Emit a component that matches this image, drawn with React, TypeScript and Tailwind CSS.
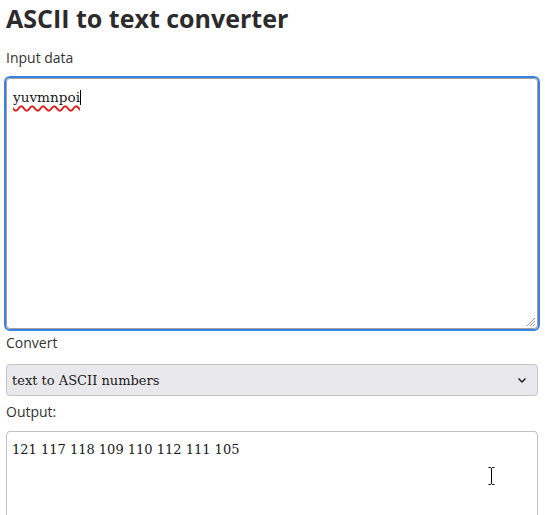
import React from "react";

export default function App() {
  return (
    <div className="relative w-[552px] h-[515px] overflow-hidden bg-white px-[6px] text-[#333333]" style={{ fontFamily: '"Open Sans", sans-serif' }}>
      <h1 className="pt-[2px] text-[25px] font-bold leading-[32px] text-[#2b2b2b]">ASCII to text converter</h1>
      <div className="mt-[13px] text-[14px] leading-[21px]">Input data</div>
      <div className="mt-[10px] h-[251px] w-[532px] rounded-[4px] border border-[#a0a0a0] outline-2 outline-solid outline-[#3a82e0] relative">
        <div className="pl-[6px] pt-[10px] text-[13.6px] leading-[16px] text-[#1a1a1a]" style={{ fontFamily: '"DejaVu Serif", serif' }}>
          <span className="underline decoration-wavy decoration-[#e01b1b] decoration-[1.5px] underline-offset-[3px]">yuvmnpoi</span>
          <span className="inline-block w-[1px] h-[15px] bg-black align-[-3px]"></span>
        </div>
        <svg className="absolute right-[1px] bottom-[1px]" width="10" height="10" viewBox="0 0 10 10">
          <line x1="9" y1="1" x2="1" y2="9" stroke="#999" strokeWidth="1" />
          <line x1="9" y1="4" x2="4" y2="9" stroke="#999" strokeWidth="1" />
          <line x1="9" y1="7" x2="7" y2="9" stroke="#999" strokeWidth="1" />
        </svg>
      </div>
      <div className="mt-[3px] text-[14px] leading-[21px]">Convert</div>
      <div className="mt-[11px] flex h-[32px] w-[532px] items-center justify-between rounded-[4px] border border-[#c4c4c8] bg-[#e9e9ed] pl-[5px] pr-[10px]">
        <span className="pt-[2px] text-[13px] text-[#1a1a1a]" style={{ fontFamily: '"DejaVu Serif", serif' }}>text to ASCII numbers</span>
        <svg width="10" height="7" viewBox="0 0 10 7">
          <polyline points="1.5,1.5 5,5 8.5,1.5" fill="none" stroke="#222" strokeWidth="1.5" />
        </svg>
      </div>
      <div className="mt-[5px] text-[14px] leading-[21px]">Output:</div>
      <div className="mt-[9px] h-[120px] w-[532px] rounded-[4px] border border-[#c0c0c0] relative">
        <div className="pl-[5px] pt-[10px] text-[13px] leading-[16px] text-[#1a1a1a]" style={{ fontFamily: '"DejaVu Serif", serif' }}>
          121 117 118 109 110 112 111 105
        </div>
        <svg className="absolute left-[480px] top-[34px]" width="9" height="20" viewBox="0 0 9 20">
          <path d="M1.5 1.5 H3.5 L4.5 2.5 L5.5 1.5 H7.5 M4.5 2.5 V17.5 M1.5 18.5 H3.5 L4.5 17.5 L5.5 18.5 H7.5" fill="none" stroke="#ffffff" strokeWidth="2.5" />
          <path d="M1.5 1.5 H3.5 L4.5 2.5 L5.5 1.5 H7.5 M4.5 2.5 V17.5 M1.5 18.5 H3.5 L4.5 17.5 L5.5 18.5 H7.5" fill="none" stroke="#000" strokeWidth="1" />
        </svg>
      </div>
    </div>
  );
}
